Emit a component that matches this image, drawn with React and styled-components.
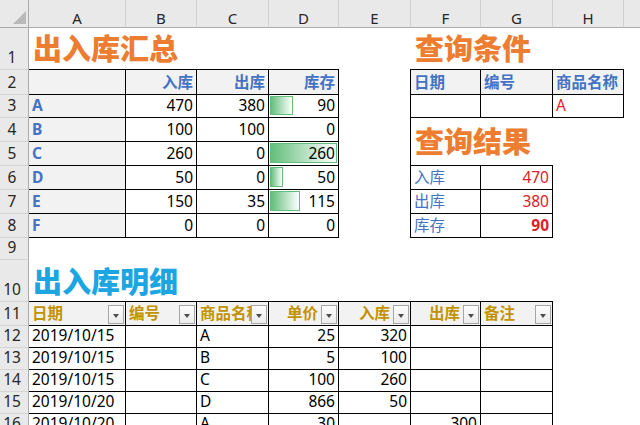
import React from 'react';
import styled, { createGlobalStyle, css } from 'styled-components';

const GlobalStyle = createGlobalStyle`
  html, body { margin: 0; padding: 0; background: #fff; overflow: hidden; }
  body { width: 640px; height: 425px; font-family: "Noto Sans", "Noto Sans CJK SC", sans-serif; }
`;

const BLUE = '#4472C4';
const ORANGE = '#ED7D31';
const CYAN = '#1BA6E2';
const GOLD = '#C29300';
const RED = '#E0202A';
const HEAD_BG = '#F2F2F2';

const Sheet = styled.div`
  display: grid;
  grid-template-columns: 29px 97px 71px 72px 70px 72px 70px 72px 71px 72px;
  grid-template-rows: 28px 42px 25px 23px 24px 24px 24px 24px 24px 22px 42px 24px 22px 22px 22px 22px 22px;
  width: 640px;
  height: 425px;
  overflow: hidden;
  background: #fff;
  font-family: "Noto Sans", "Noto Sans CJK SC", sans-serif;
`;

const Corner = styled.div`
  grid-column: 1;
  grid-row: 1;
  background: #E9E9E9;
  border-right: 1px solid #ABABAB;
  border-bottom: 1px solid #ABABAB;
  display: flex;
  justify-content: flex-end;
  align-items: flex-end;
  padding: 0 2px 3px 0;
  &::after {
    content: '';
    width: 0;
    height: 0;
    border-left: 13px solid transparent;
    border-bottom: 13px solid #B9B9B9;
  }
`;

const ColHead = styled.div`
  grid-column: ${p => p.$c};
  grid-row: 1;
  background: #E9E9E9;
  border-right: 1px solid #D0D0D0;
  border-bottom: 1px solid #ABABAB;
  display: flex;
  justify-content: center;
  align-items: flex-end;
  padding-bottom: 1px;
  font-size: 15px;
  line-height: 16px;
  color: #262626;
`;

const RowHead = styled.div`
  grid-column: 1;
  grid-row: ${p => p.$r};
  background: #E9E9E9;
  border-right: 1px solid #ABABAB;
  border-bottom: 1px solid #D4D4D4;
  display: flex;
  justify-content: center;
  align-items: flex-end;
  padding: 0 4px 3px 0;
  font-size: 15.5px;
  line-height: 18px;
  color: #262626;
`;

const Cell = styled.div`
  grid-column: ${p => p.$c} / span ${p => p.$cs || 1};
  grid-row: ${p => p.$r} / span ${p => p.$rs || 1};
  position: relative;
  display: flex;
  align-items: flex-end;
  justify-content: ${p => (p.$align === 'right' ? 'flex-end' : 'flex-start')};
  padding: 0 ${p => (p.$pr != null ? p.$pr : 3)}px 3px 3px;
  font-size: 15.5px;
  line-height: 18px;
  color: ${p => p.$color || '#000'};
  font-weight: ${p => (p.$bold ? 700 : 400)};
  background: ${p => p.$bg || 'transparent'};
  white-space: nowrap;
  overflow: ${p => (p.$clip ? 'hidden' : 'visible')};
  border-right: 1px solid #000;
  border-bottom: 1px solid #000;
  ${p => p.$top && css`
    margin-top: -1px;
    border-top: 1px solid #000;
  `}
  ${p => p.$left && css`
    margin-left: -1px;
    border-left: 1px solid #000;
  `}
`;

const CellText = styled.span`
  position: relative;
  z-index: 1;
`;

const Title = styled.div`
  grid-column: ${p => p.$c} / span ${p => p.$cs};
  grid-row: ${p => p.$r} / span ${p => p.$rs || 1};
  display: flex;
  align-items: ${p => p.$v || 'flex-end'};
  padding: 0 0 ${p => p.$pb}px 4px;
  font-family: "Noto Sans CJK SC", sans-serif;
  font-weight: 900;
  font-size: 29px;
  line-height: 29px;
  color: ${p => p.$color};
  white-space: nowrap;
  ${p => p.$left && css`
    margin-left: -1px;
    border-left: 1px solid #000;
  `}
`;

const Bar = styled.div`
  position: absolute;
  left: 1px;
  top: 1px;
  bottom: 2px;
  box-sizing: border-box;
  border: 1px solid #63BE7B;
  background: linear-gradient(to right, #63BE7B, #FFFFFF);
`;

const Filter = styled.span`
  position: absolute;
  right: 1px;
  bottom: 1px;
  width: 16px;
  height: 19px;
  box-sizing: border-box;
  border: 1px solid #A6A6A6;
  background: linear-gradient(#FDFDFD, #EBEBEB);
  display: flex;
  align-items: center;
  justify-content: center;
  z-index: 2;
  &::after {
    content: '';
    width: 0;
    height: 0;
    border-left: 3.5px solid transparent;
    border-right: 3.5px solid transparent;
    border-top: 4px solid #4D4D4D;
    margin-top: 2px;
  }
`;

const letters = ['A', 'B', 'C', 'D', 'E', 'F', 'G', 'H', ''];

const summary = [
  ['A', 470, 380, 90],
  ['B', 100, 100, 0],
  ['C', 260, 0, 260],
  ['D', 50, 0, 50],
  ['E', 150, 35, 115],
  ['F', 0, 0, 0],
];

const detailHead = [
  { t: '日期', align: 'left' },
  { t: '编号', align: 'left' },
  { t: '商品名称', align: 'left' },
  { t: '单价', align: 'right' },
  { t: '入库', align: 'right' },
  { t: '出库', align: 'right' },
  { t: '备注', align: 'left' },
];

const detailRows = [
  ['2019/10/15', '', 'A', '25', '320', '', ''],
  ['2019/10/15', '', 'B', '5', '100', '', ''],
  ['2019/10/15', '', 'C', '100', '260', '', ''],
  ['2019/10/20', '', 'D', '866', '50', '', ''],
  ['2019/10/20', '', 'A', '30', '', '300', ''],
];
const detailAlign = ['left', 'left', 'left', 'right', 'right', 'right', 'left'];

const barWidth = v => Math.round((v / 260) * 67);

export default function App() {
  // grid row = sheet row + 1 ; grid col: A = 2
  return (
    <>
      <GlobalStyle />
      <Sheet>
        <Corner />
        {letters.map((l, i) => (
          <ColHead key={'c' + i} $c={i + 2}>{l}</ColHead>
        ))}
        {Array.from({ length: 16 }, (_, i) => (
          <RowHead key={'r' + i} $r={i + 2}>{i + 1}</RowHead>
        ))}

        {/* 出入库汇总 */}
        <Title $c={2} $cs={4} $r={2} $pb={8} $color={ORANGE}>出入库汇总</Title>
        <Cell $c={2} $r={3} $top $bg={HEAD_BG} />
        {['入库', '出库', '库存'].map((t, i) => (
          <Cell key={t} $c={3 + i} $r={3} $top $bg={HEAD_BG} $align="right" $bold $color={BLUE}>
            <CellText>{t}</CellText>
          </Cell>
        ))}
        {summary.map((row, ri) => (
          <React.Fragment key={row[0]}>
            <Cell $c={2} $r={4 + ri} $bg={HEAD_BG} $bold $color={BLUE}>
              <CellText>{row[0]}</CellText>
            </Cell>
            <Cell $c={3} $r={4 + ri} $align="right"><CellText>{row[1]}</CellText></Cell>
            <Cell $c={4} $r={4 + ri} $align="right"><CellText>{row[2]}</CellText></Cell>
            <Cell $c={5} $r={4 + ri} $align="right">
              {row[3] > 0 && <Bar style={{ width: barWidth(row[3]) }} />}
              <CellText>{row[3]}</CellText>
            </Cell>
          </React.Fragment>
        ))}

        {/* 查询条件 */}
        <Title $c={7} $cs={3} $r={2} $pb={8} $color={ORANGE}>查询条件</Title>
        {['日期', '编号', '商品名称'].map((t, i) => (
          <Cell key={t} $c={7 + i} $r={3} $top $left={i === 0} $bg={HEAD_BG} $bold $color={BLUE}>
            <CellText>{t}</CellText>
          </Cell>
        ))}
        <Cell $c={7} $r={4} $left />
        <Cell $c={8} $r={4} />
        <Cell $c={9} $r={4} $color={RED}><CellText>A</CellText></Cell>

        {/* 查询结果 */}
        <Title $c={7} $cs={3} $r={5} $rs={2} $v="center" $pb={4} $left $color={ORANGE}>查询结果</Title>
        {[['入库', '470', false], ['出库', '380', false], ['库存', '90', true]].map((r, i) => (
          <React.Fragment key={r[0]}>
            <Cell $c={7} $r={7 + i} $top={i === 0} $left $color={BLUE}><CellText>{r[0]}</CellText></Cell>
            <Cell $c={8} $r={7 + i} $top={i === 0} $align="right" $color={RED} $bold={r[2]}>
              <CellText>{r[1]}</CellText>
            </Cell>
          </React.Fragment>
        ))}

        {/* 出入库明细 */}
        <Title $c={2} $cs={4} $r={11} $pb={7} $color={CYAN}>出入库明细</Title>
        {detailHead.map((h, i) => (
          <Cell
            key={h.t}
            $c={2 + i}
            $r={12}
            $top
            $clip
            $bg={HEAD_BG}
            $bold
            $color={GOLD}
            $align={h.align}
            $pr={h.align === 'right' ? 20 : 3}
          >
            <CellText>{h.t}</CellText>
            <Filter />
          </Cell>
        ))}
        {detailRows.map((row, ri) =>
          row.map((v, ci) => (
            <Cell key={ri + '-' + ci} $c={2 + ci} $r={13 + ri} $align={detailAlign[ci]}>
              <CellText>{v}</CellText>
            </Cell>
          ))
        )}
      </Sheet>
    </>
  );
}
